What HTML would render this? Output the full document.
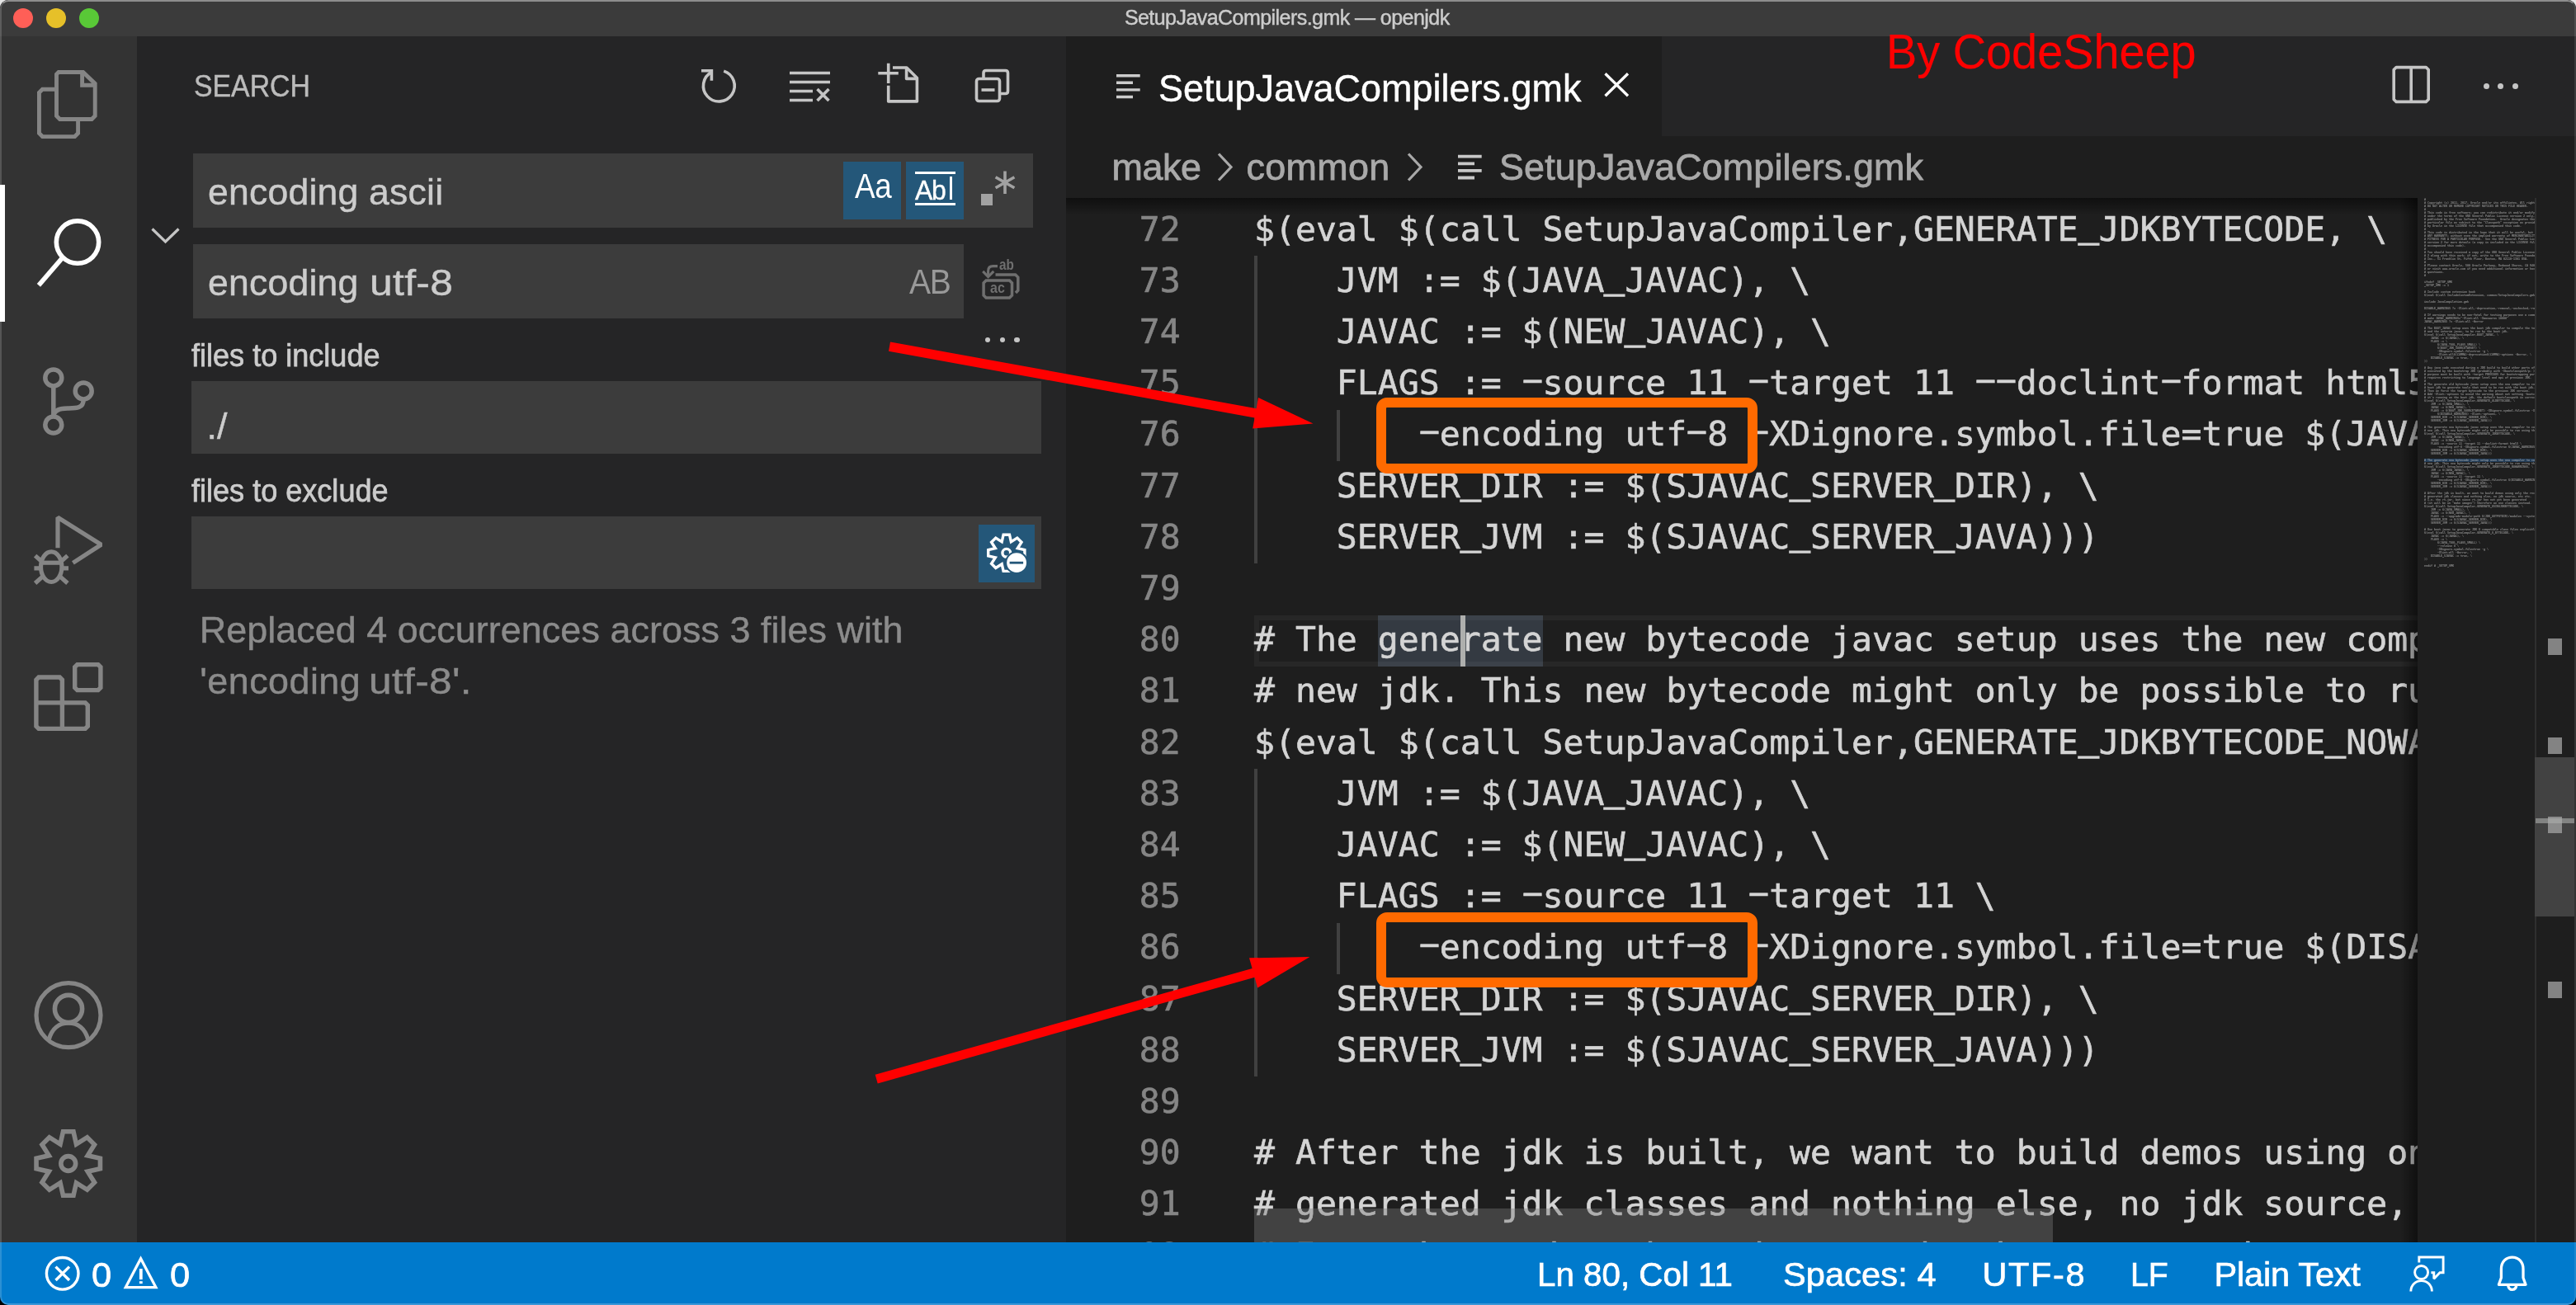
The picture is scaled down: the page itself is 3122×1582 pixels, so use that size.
<!DOCTYPE html>
<html lang="en"><head><meta charset="utf-8"><title>SetupJavaCompilers.gmk — openjdk</title><style>
html{background:linear-gradient(#e4e4e4 0,#e4e4e4 50%,#000 50%,#000 100%);}
html,body{margin:0;padding:0;overflow:hidden;}
body{width:3122px;height:1582px;}
#root{position:relative;width:3122px;height:1582px;overflow:hidden;background:#1e1e1e;font-family:"Liberation Sans", "DejaVu Sans", sans-serif;border-radius:10px;will-change:transform;}
#root div,#root span,#root svg,#root pre{position:absolute;}
.t{white-space:pre;line-height:1;-webkit-text-stroke:0.45px currentColor;}
.ln{left:-11.3px;width:150px;text-align:right;height:62.2px;line-height:62.2px;font-family:"DejaVu Sans Mono", "Liberation Mono", monospace;font-size:41.47px;color:#858585;white-space:pre;-webkit-text-stroke:0.6px #858585;}
.cl{left:228px;height:62.2px;line-height:62.2px;font-family:"DejaVu Sans Mono", "Liberation Mono", monospace;font-size:41.47px;color:#d4d4d4;white-space:pre;-webkit-text-stroke:0.6px #d4d4d4;}
.hy{position:static !important;display:inline-block;transform:translateY(-3.9px) scaleX(2);}
.us{position:static !important;display:inline-block;transform:translateY(-5.2px) scaleX(0.99);-webkit-text-stroke:1.6px #d4d4d4;}
.mm{margin:0;left:0;top:0;font-family:"DejaVu Sans Mono", "Liberation Mono", monospace;font-size:20px;line-height:24.096px;color:#c8c8c8;opacity:.6;transform-origin:0 0;transform:scale(0.166);white-space:pre;font-weight:bold;}
</style></head><body><div id="root">
<div style="left:0px;top:0px;width:3122px;height:44px;background:#3b3b3b;"></div>
<div style="left:15.8px;top:9.8px;width:24.4px;height:24.4px;border-radius:50%;background:#ff5f57"></div>
<div style="left:55.8px;top:9.8px;width:24.4px;height:24.4px;border-radius:50%;background:#e6c029"></div>
<div style="left:95.8px;top:9.8px;width:24.4px;height:24.4px;border-radius:50%;background:#59c837"></div>
<span class="t " style="left:1362.90px;top:9.34px;font-size:25px;color:#cccccc;letter-spacing:-0.55px;">SetupJavaCompilers.gmk — openjdk</span>
<div style="left:0px;top:44px;width:166px;height:1462px;background:#333333;"></div>
<div style="left:0px;top:223.7px;width:6px;height:166.3px;background:#ffffff;"></div>
<svg style="left:40px;top:80px;" width="84" height="94" viewBox="40 80 84 94">
<g fill="none" stroke="#858585" stroke-width="4.9" stroke-linejoin="miter">
<path d="M71 87.45 H100.7 L115.2 101.4 V140.45 L111.2 144.45 H72.5 L68.5 140.45 V89.95 Z"/>
<path d="M99.6 87.45 V103.3 H115.2"/>
<path d="M68.5 108.3 H51.45 L47.45 112.3 V161.6 L51.45 165.6 H90.6 L94.6 161.6 V144.45"/>
</g></svg>
<svg style="left:40px;top:258px;" width="90" height="96" viewBox="40 258 90 96">
<g fill="none" stroke="#ffffff" stroke-width="5.6">
<circle cx="94" cy="293.6" r="25.7"/>
<path d="M76 312.2 L46.9 345.8"/>
</g></svg>
<svg style="left:40px;top:438px;" width="84" height="96" viewBox="40 438 84 96">
<g fill="none" stroke="#858585" stroke-width="5.5" transform="translate(0 0.4)">
<circle cx="64.8" cy="457.5" r="10"/>
<circle cx="64.8" cy="514.7" r="10"/>
<circle cx="101.2" cy="473.5" r="10"/>
<path d="M64.8 467.5 V504.7"/>
<path d="M101.2 483.5 C101.2 495 92 494.5 82 494.5 C72 494.5 64.8 497 64.8 505"/>
</g></svg>
<svg style="left:36px;top:620px;" width="94" height="94" viewBox="36 620 94 94">
<g fill="none" stroke="#858585" stroke-width="5.2">
<path d="M70 664.2 V627.3 L122.6 660.3 L88.4 682.4" stroke-linejoin="bevel"/>
<ellipse cx="62.2" cy="687.2" rx="12.7" ry="18.3"/>
<path d="M50.5 682.2 H74"/>
<path d="M41.4 688.9 H49.5 M75 688.9 H83"/>
<path d="M42.6 673.6 L51 681 M81.9 673.6 L73.5 681"/>
<path d="M42.6 707 L52 698.6 M81.9 707 L72.5 698.6"/>
</g></svg>
<svg style="left:36px;top:798px;" width="94" height="94" viewBox="36 798 94 94">
<g fill="none" stroke="#858585" stroke-width="5.4" stroke-linejoin="miter">
<path d="M46.9 821 H72.4 L75.4 824 V851.9 H103.3 L106.3 854.9 V880.4 L103.3 883.4 H46.9 L43.9 880.4 V824 Z"/>
<path d="M75.4 851.9 V883.4 M43.9 851.9 H75.4"/>
<path d="M93.7 805.6 H118.9 L121.9 808.6 V833.6 L118.9 836.6 H93.7 L90.7 833.6 V808.6 Z"/>
</g></svg>
<svg style="left:36px;top:1184px;" width="94" height="94" viewBox="36 1184 94 94">
<g fill="none" stroke="#858585" stroke-width="5.2" transform="translate(0 0.5)">
<circle cx="83" cy="1230.2" r="39"/>
<circle cx="83" cy="1222.5" r="16.6" stroke-width="5.6"/>
<path d="M59.3 1259.5 C63 1246 72 1239.6 83 1239.6 C94 1239.6 103 1246 106.7 1259.5"/>
</g></svg>
<svg style="left:36px;top:1364px;" width="94" height="94" viewBox="36 1364 94 94">
<g fill="none" stroke="#858585" stroke-width="5.6" stroke-linejoin="miter">
<path d="M76.48 1371.80 L89.02 1371.80 L92.47 1387.03 L105.68 1378.71 L114.54 1387.57 L106.22 1400.78 L121.45 1404.23 L121.45 1416.77 L106.22 1420.22 L114.54 1433.43 L105.68 1442.29 L92.47 1433.97 L89.02 1449.20 L76.48 1449.20 L73.03 1433.97 L59.82 1442.29 L50.96 1433.43 L59.28 1420.22 L44.05 1416.77 L44.05 1404.23 L59.28 1400.78 L50.96 1387.57 L59.82 1378.71 L73.03 1387.03 Z"/>
<circle cx="82.75" cy="1410.5" r="8.9"/>
</g></svg>
<div style="left:166px;top:44px;width:1126px;height:1462px;background:#252526;"></div>
<span class="t " style="left:235.00px;top:86.47px;font-size:37.6px;color:#bbbbbb;transform-origin:0 0;transform:scaleX(0.9);">SEARCH</span>
<svg style="left:840px;top:76px;" width="60" height="56" viewBox="840 76 60 56">
<g fill="none" stroke="#c5c5c5" stroke-width="3.6">
<path d="M877.2 86.1 A18.9 18.9 0 1 1 862.4 87.4"/>
<path d="M850 85.8 H862.4 V97.8"/>
</g></svg>
<svg style="left:950px;top:76px;" width="64" height="56" viewBox="950 76 64 56">
<g fill="none" stroke="#c5c5c5" stroke-width="3.6">
<path d="M957 88.5 H1006 M957 99.5 H1006 M957 110.5 H985 M957 121.5 H985"/>
<path d="M990.5 108 L1004.5 122 M1004.5 108 L990.5 122"/>
</g></svg>
<svg style="left:1058px;top:70px;" width="64" height="62" viewBox="1058 70 64 62">
<g fill="none" stroke="#c5c5c5" stroke-width="3.6" stroke-linejoin="round">
<path d="M1064.3 88.7 H1088.8 M1076.7 76.7 V101"/>
<path d="M1082 82 H1098.8 L1111.4 94.6 V122.9 H1076.7 V103.8"/>
<path d="M1098.6 82 V95.4 H1111"/>
</g></svg>
<svg style="left:1176px;top:78px;" width="56" height="52" viewBox="1176 78 56 52">
<g fill="none" stroke="#c5c5c5" stroke-width="3.6" stroke-linejoin="round">
<rect x="1183.5" y="95.5" width="28" height="27" rx="3"/>
<path d="M1192 95 V88.5 Q1192 85.5 1195 85.5 H1218.5 Q1221.5 85.5 1221.5 88.5 V110.5 Q1221.5 113.5 1218.5 113.5 H1212"/>
<path d="M1189.5 109 H1205.5"/>
</g></svg>
<svg style="left:178px;top:270px;" width="46" height="32" viewBox="178 270 46 32"><path d="M184.5 277.5 L200.5 293 L216.5 277.5" fill="none" stroke="#c5c5c5" stroke-width="3.2"/></svg>
<div style="left:234px;top:186px;width:1018px;height:90px;background:#3c3c3c;"></div>
<span class="t " style="left:251.90px;top:210.65px;font-size:44.6px;color:#cccccc;letter-spacing:0.2px;">encoding ascii</span>
<div style="left:1022px;top:196px;width:70px;height:70px;background:#245779;"></div>
<span class="t " style="left:1036.30px;top:204.80px;font-size:41.7px;color:#ffffff;letter-spacing:-0.5px;-webkit-text-stroke:0;transform-origin:0 0;transform:scaleX(0.885);">Aa</span>
<div style="left:1098px;top:196px;width:70px;height:70px;background:#245779;"></div>
<span class="t " style="left:1108.80px;top:213.02px;font-size:34px;color:#ffffff;letter-spacing:-1.5px;-webkit-text-stroke:0.4px #fff;transform-origin:0 0;transform:scaleX(0.94);">Ab</span>
<div style="left:1151.0px;top:214.2px;width:3.0px;height:27.9px;background:#ffffff;"></div>
<div style="left:1109px;top:207.8px;width:48.8px;height:3.3px;background:#ffffff;"></div>
<div style="left:1109px;top:245.9px;width:48.8px;height:3.2px;background:#ffffff;"></div>
<div style="left:1188.9px;top:235px;width:13.8px;height:13.9px;background:#a2a2a2;"></div>
<svg style="left:1202px;top:205px;" width="34" height="34" viewBox="1202 205 34 34">
<g stroke="#a2a2a2" stroke-width="3.6" fill="none">
<path d="M1218 207.6 V235 M1206.6 214.8 L1229.4 227.8 M1229.4 214.8 L1206.6 227.8"/>
</g></svg>
<div style="left:234px;top:296px;width:934px;height:90px;background:#3c3c3c;"></div>
<span class="t " style="left:251.90px;top:320.55px;font-size:44.6px;color:#cccccc;letter-spacing:0.2px;">encoding </span>
<span class="t " style="left:448.00px;top:320.55px;font-size:44.6px;color:#cccccc;letter-spacing:0.3px;transform-origin:0 0;transform:scaleX(1.115);">utf-8</span>
<span class="t " style="left:1101.50px;top:319.93px;font-size:43.2px;color:#999999;letter-spacing:-1.5px;-webkit-text-stroke:0;transform-origin:0 0;transform:scaleX(0.905);">AB</span>
<svg style="left:1186px;top:310px;" width="54" height="58" viewBox="1186 310 54 58">
<g fill="none" stroke="#6f6f6f" stroke-width="3.5" stroke-linejoin="miter">
<path d="M1195.1 339.9 H1223.5 L1226.5 342.9 V358.1 L1223.5 361.1 H1195.1 L1192.1 358.1 V342.9 Z"/>
<path d="M1206.5 332.9 H1230.6 L1233.8 336.1 V352 L1231 355"/>
<path d="M1209 322.6 H1203.5 Q1197.6 322.6 1197.6 328.5 V334" stroke-width="3.1"/>
<path d="M1191.2 328.9 L1197.6 335.6 L1204.3 328.9" stroke-width="3.1"/>
</g></svg>
<span class="t " style="left:1211.00px;top:312.12px;font-size:18.4px;color:#6f6f6f;font-weight:bold;-webkit-text-stroke:0;transform-origin:0 0;transform:scaleX(0.83);">ab</span>
<span class="t " style="left:1200.30px;top:339.72px;font-size:18.4px;color:#6f6f6f;font-weight:bold;-webkit-text-stroke:0;transform-origin:0 0;transform:scaleX(0.87);">ac</span>
<div style="left:1193.9px;top:408.8px;width:6.6px;height:6.6px;border-radius:50%;background:#c5c5c5"></div>
<div style="left:1211.6000000000001px;top:408.8px;width:6.6px;height:6.6px;border-radius:50%;background:#c5c5c5"></div>
<div style="left:1229.1000000000001px;top:408.8px;width:6.6px;height:6.6px;border-radius:50%;background:#c5c5c5"></div>
<span class="t " style="left:231.60px;top:410.96px;font-size:39.5px;color:#cccccc;-webkit-text-stroke:0.75px #cccccc;transform-origin:0 0;transform:scaleX(0.913);">files to include</span>
<div style="left:232px;top:462px;width:1030px;height:87.5px;background:#3c3c3c;"></div>
<span class="t " style="left:250.50px;top:494.59px;font-size:44.9px;color:#cccccc;">./</span>
<span class="t " style="left:231.60px;top:574.96px;font-size:39.5px;color:#cccccc;-webkit-text-stroke:0.75px #cccccc;transform-origin:0 0;transform:scaleX(0.913);">files to exclude</span>
<div style="left:232px;top:626.4px;width:1030px;height:87.2px;background:#3c3c3c;"></div>
<div style="left:1186px;top:636px;width:68px;height:70px;background:#245779;"></div>
<svg style="left:1190px;top:640px;" width="60" height="62" viewBox="1190 640 60 62">
<defs><mask id="gm" maskUnits="userSpaceOnUse" x="1190" y="640" width="60" height="62"><rect x="1190" y="640" width="60" height="62" fill="#fff"/><circle cx="1232.1" cy="682.2" r="14" fill="#000"/></mask></defs>
<g fill="none" stroke="#ffffff" stroke-width="3.4" mask="url(#gm)">
<path d="M1216.10 648.21 L1223.50 648.21 L1225.39 656.81 L1232.81 652.06 L1238.04 657.29 L1233.29 664.71 L1241.89 666.60 L1241.89 674.00 L1233.29 675.89 L1238.04 683.31 L1232.81 688.54 L1225.39 683.79 L1223.50 692.39 L1216.10 692.39 L1214.21 683.79 L1206.79 688.54 L1201.56 683.31 L1206.31 675.89 L1197.71 674.00 L1197.71 666.60 L1206.31 664.71 L1201.56 657.29 L1206.79 652.06 L1214.21 656.81 Z"/>
<circle cx="1219.8" cy="670.3" r="4.9"/>
</g>
<circle cx="1232.1" cy="682.2" r="11.9" fill="#ffffff"/>
<rect x="1223.6" y="680.8" width="16.5" height="2.8" fill="#245779"/>
</svg>
<span class="t " style="left:241.70px;top:742.29px;font-size:44.9px;color:#8b8b8b;letter-spacing:0.05px;">Replaced 4 occurrences across 3 files with</span>
<span class="t " style="left:242.30px;top:803.79px;font-size:44.9px;color:#8b8b8b;letter-spacing:0.45px;">&#x27;encoding </span>
<span class="t " style="left:447.20px;top:803.79px;font-size:44.9px;color:#8b8b8b;letter-spacing:0.3px;transform-origin:0 0;transform:scaleX(1.105);">utf-8&#x27;.</span>
<div style="left:1292px;top:44px;width:1830px;height:121px;background:#252526;"></div>
<div style="left:1292px;top:44px;width:722px;height:121px;background:#1e1e1e;"></div>
<div style="left:1292px;top:165px;width:1830px;height:1341px;background:#1e1e1e;"></div>
<svg style="left:1351px;top:87.5px;" width="34" height="34" viewBox="1351 87.5 34 34"><path d="M1353 91.2 H1381.7 M1353 99.8 H1373 M1353 108.4 H1381.7 M1353 117.0 H1373" stroke="#cccccc" stroke-width="3.4" fill="none"/></svg>
<span class="t " style="left:1403.60px;top:83.21px;font-size:47px;color:#ffffff;transform-origin:0 0;transform:scaleX(0.957);">SetupJavaCompilers.gmk</span>
<svg style="left:1940px;top:84px;" width="40" height="38" viewBox="1940 84 40 38"><path d="M1945.5 89.3 L1973 116.3 M1973 89.3 L1945.5 116.3" stroke="#ffffff" stroke-width="3.3" fill="none"/></svg>
<span class="t " style="left:2285.60px;top:32.77px;font-size:59.1px;color:#ff0000;-webkit-text-stroke:0.2px #ff0000;transform-origin:0 0;transform:scaleX(0.945);">By CodeSheep</span>
<svg style="left:2890px;top:60px;" width="70" height="80" viewBox="2890 60 70 80">
<g fill="none" stroke="#c5c5c5" stroke-width="3.6" stroke-linejoin="round">
<path d="M2904.2 81.6 H2940.2 L2943.2 84.6 V120.4 L2940.2 123.4 H2904.2 L2901.2 120.4 V84.6 Z"/>
<path d="M2922.2 81.6 V123.4"/>
</g></svg>
<div style="left:3010.0px;top:100.9px;width:7px;height:7px;border-radius:50%;background:#c5c5c5"></div>
<div style="left:3027.3px;top:100.9px;width:7px;height:7px;border-radius:50%;background:#c5c5c5"></div>
<div style="left:3044.7px;top:100.9px;width:7px;height:7px;border-radius:50%;background:#c5c5c5"></div>
<span class="t " style="left:1347.50px;top:180.89px;font-size:44.9px;color:#a9a9a9;letter-spacing:-0.45px;-webkit-text-stroke:0.8px #a9a9a9;">make</span>
<svg style="left:1470px;top:180px;" width="30" height="46" viewBox="1470 180 30 46"><path d="M1477 186.5 L1492 202.5 L1477 218.5" fill="none" stroke="#a9a9a9" stroke-width="3.2"/></svg>
<span class="t " style="left:1510.60px;top:180.89px;font-size:44.9px;color:#a9a9a9;letter-spacing:0.3px;-webkit-text-stroke:0.8px #a9a9a9;">common</span>
<svg style="left:1700px;top:180px;" width="30" height="46" viewBox="1700 180 30 46"><path d="M1707 186.5 L1722 202.5 L1707 218.5" fill="none" stroke="#a9a9a9" stroke-width="3.2"/></svg>
<svg style="left:1764.5px;top:185.5px;" width="34" height="34" viewBox="1764.5 185.5 34 34"><path d="M1766.5 189.2 H1795.2 M1766.5 197.8 H1786.5 M1766.5 206.4 H1795.2 M1766.5 215.0 H1786.5" stroke="#c8c8c8" stroke-width="3.8" fill="none"/></svg>
<span class="t " style="left:1817.00px;top:180.89px;font-size:44.9px;color:#a9a9a9;letter-spacing:0.12px;-webkit-text-stroke:0.8px #a9a9a9;">SetupJavaCompilers.gmk</span>
<div style="left:1292px;top:240px;width:1638px;height:1266px;overflow:hidden">
<div style="left:378px;top:506.1px;width:200px;height:61.8px;background:#343a42"></div>
<div style="left:228px;top:506.1px;width:1500px;height:61.8px;box-sizing:border-box;border:6.2px solid rgba(255,255,255,0.045)"></div>
<div style="left:228px;top:70.0px;width:3.5px;height:373.2px;background:#404040"></div>
<div style="left:328px;top:256.6px;width:3.5px;height:62.2px;background:#404040"></div>
<div style="left:228px;top:692.0px;width:3.5px;height:373.2px;background:#404040"></div>
<div style="left:328px;top:878.6px;width:3.5px;height:62.2px;background:#404040"></div>
<div class="ln" style="top:-55.60px">71</div>
<div class="cl" style="top:-55.60px"># new jdk. This new bytecode might only be possible to run using the new jvm.</div>
<div class="ln" style="top:6.60px">72</div>
<div class="cl" style="top:6.60px">$(eval $(call SetupJavaCompiler,GENERATE<span class="us">_</span>JDKBYTECODE, \</div>
<div class="ln" style="top:68.80px">73</div>
<div class="cl" style="top:68.80px">    JVM := $(JAVA<span class="us">_</span>JAVAC), \</div>
<div class="ln" style="top:131.00px">74</div>
<div class="cl" style="top:131.00px">    JAVAC := $(NEW<span class="us">_</span>JAVAC), \</div>
<div class="ln" style="top:193.20px">75</div>
<div class="cl" style="top:193.20px">    FLAGS := <span class="hy">-</span>source 11 <span class="hy">-</span>target 11 <span class="hy">-</span><span class="hy">-</span>doclint<span class="hy">-</span>format html5 \</div>
<div class="ln" style="top:255.40px">76</div>
<div class="cl" style="top:255.40px">        <span class="hy">-</span>encoding utf<span class="hy">-</span>8 <span class="hy">-</span>XDignore.symbol.file=true $(JAVAC<span class="us">_</span>WARNINGS), \</div>
<div class="ln" style="top:317.60px">77</div>
<div class="cl" style="top:317.60px">    SERVER<span class="us">_</span>DIR := $(SJAVAC<span class="us">_</span>SERVER<span class="us">_</span>DIR), \</div>
<div class="ln" style="top:379.80px">78</div>
<div class="cl" style="top:379.80px">    SERVER<span class="us">_</span>JVM := $(SJAVAC<span class="us">_</span>SERVER<span class="us">_</span>JAVA)))</div>
<div class="ln" style="top:442.00px">79</div>
<div class="ln" style="top:504.20px">80</div>
<div class="cl" style="top:504.20px"># The generate new bytecode javac setup uses the new compiler to compile for the</div>
<div class="ln" style="top:566.40px">81</div>
<div class="cl" style="top:566.40px"># new jdk. This new bytecode might only be possible to run using the new jvm.</div>
<div class="ln" style="top:628.60px">82</div>
<div class="cl" style="top:628.60px">$(eval $(call SetupJavaCompiler,GENERATE<span class="us">_</span>JDKBYTECODE<span class="us">_</span>NOWARNINGS, \</div>
<div class="ln" style="top:690.80px">83</div>
<div class="cl" style="top:690.80px">    JVM := $(JAVA<span class="us">_</span>JAVAC), \</div>
<div class="ln" style="top:753.00px">84</div>
<div class="cl" style="top:753.00px">    JAVAC := $(NEW<span class="us">_</span>JAVAC), \</div>
<div class="ln" style="top:815.20px">85</div>
<div class="cl" style="top:815.20px">    FLAGS := <span class="hy">-</span>source 11 <span class="hy">-</span>target 11 \</div>
<div class="ln" style="top:877.40px">86</div>
<div class="cl" style="top:877.40px">        <span class="hy">-</span>encoding utf<span class="hy">-</span>8 <span class="hy">-</span>XDignore.symbol.file=true $(DISABLE<span class="us">_</span>WARNINGS), \</div>
<div class="ln" style="top:939.60px">87</div>
<div class="cl" style="top:939.60px">    SERVER<span class="us">_</span>DIR := $(SJAVAC<span class="us">_</span>SERVER<span class="us">_</span>DIR), \</div>
<div class="ln" style="top:1001.80px">88</div>
<div class="cl" style="top:1001.80px">    SERVER<span class="us">_</span>JVM := $(SJAVAC<span class="us">_</span>SERVER<span class="us">_</span>JAVA)))</div>
<div class="ln" style="top:1064.00px">89</div>
<div class="ln" style="top:1126.20px">90</div>
<div class="cl" style="top:1126.20px"># After the jdk is built, we want to build demos using only the recently</div>
<div class="ln" style="top:1188.40px">91</div>
<div class="cl" style="top:1188.40px"># generated jdk classes and nothing else, no jdk source, etc etc.</div>
<div class="ln" style="top:1250.60px">92</div>
<div class="cl" style="top:1250.60px"># I.e. the rt.jar, but since rt.jar has not yet been generated</div>
<div style="left:478.20000000000005px;top:506.1px;width:6px;height:61.8px;background:#aeafad"></div>
</div>
<div style="left:1292px;top:240px;width:1780px;height:21px;background:linear-gradient(#000000 0,rgba(0,0,0,0) 100%);opacity:.5"></div>
<div style="left:1520px;top:1464.5px;width:968px;height:41.5px;background:rgba(121,121,121,0.4);"></div>
<div style="left:2930px;top:240px;width:142px;height:1266px;background:#1e1e1e;"></div>
<div style="left:2909px;top:240px;width:21px;height:1266px;background:linear-gradient(90deg,rgba(0,0,0,0),rgba(0,0,0,0.48))"></div>
<div style="left:2937.5px;top:556px;width:134.5px;height:4px;background:#264f78;opacity:.65"></div>
<div style="left:2937.5px;top:240px;width:134.5px;height:460px;overflow:hidden">
<pre class="mm">#
# Copyright (c) 2011, 2017, Oracle and/or its affiliates. All rights reserved.
# DO NOT ALTER OR REMOVE COPYRIGHT NOTICES OR THIS FILE HEADER.
#
# This code is free software; you can redistribute it and/or modify it
# under the terms of the GNU General Public License version 2 only, as
# published by the Free Software Foundation.  Oracle designates this
# particular file as subject to the &quot;Classpath&quot; exception as provided
# by Oracle in the LICENSE file that accompanied this code.
#
# This code is distributed in the hope that it will be useful, but WITHOUT
# ANY WARRANTY; without even the implied warranty of MERCHANTABILITY or
# FITNESS FOR A PARTICULAR PURPOSE.  See the GNU General Public License
# version 2 for more details (a copy is included in the LICENSE file that
# accompanied this code).
#
# You should have received a copy of the GNU General Public License version
# 2 along with this work; if not, write to the Free Software Foundation,
# Inc., 51 Franklin St, Fifth Floor, Boston, MA 02110-1301 USA.
#
# Please contact Oracle, 500 Oracle Parkway, Redwood Shores, CA 94065 USA
# or visit www.oracle.com if you need additional information or have any
# questions.
#

ifndef _SETUP_GMK
_SETUP_GMK := 1

# Include custom extension hook
$(eval $(call IncludeCustomExtension, common/SetupJavaCompilers.gmk))

include JavaCompilation.gmk

DISABLE_WARNINGS ?= -Xlint:all,-deprecation,-removal,-unchecked,-rawtypes,-cast,-serial,-dep-ann,-static,-fallthrough,-try,-varargs,-empty,-finally

# If warnings needs to be non-fatal for testing purposes use a command like:
# make JAVAC_WARNINGS=&quot;-Xlint:all -Xmaxwarns 10000&quot;
JAVAC_WARNINGS ?= -Xlint:all -Werror

# The BOOT_JAVAC setup uses the boot jdk compiler to compile the tools
# and the interim javac, to be run by the boot jdk.
$(eval $(call SetupJavaCompiler,BOOT_JAVAC, \
    JAVAC := $(JAVAC), \
    FLAGS := \
        $(JAVA_TOOL_FLAGS_SMALL) \
        $(BOOT_JDK_SOURCETARGET) \
        -XDignore.symbol.file=true -g \
        -Xlint:all$(COMMA)-deprecation$(COMMA)-options -Werror, \
    DISABLE_SJAVAC := true, \
))

# Any java code executed during a JDK build to build other parts of the JDK must be
# executed by the bootstrap JDK (probably with -Xbootclasspath/p: ) and for this
# purpose must be built with -target PREVIOUS for bootstrapping purposes, which
# requires restricting to language level and api of previous JDK.
#
# The generate old bytecode javac setup uses the new compiler to compile for the
# boot jdk to generate tools that need to be run with the boot jdk.
# Thus we force the target bytecode to the previous JDK version.
# Add -Xlint:-options to avoid the warning about not setting -bootclasspath. Since
# it&#x27;s running on the boot jdk, the default bootclasspath is correct.
$(eval $(call SetupJavaCompiler,GENERATE_OLDBYTECODE, \
    JVM := $(JAVA_SMALL), \
    JAVAC := $(NEW_JAVAC), \
    FLAGS := $(BOOT_JDK_SOURCETARGET) -XDignore.symbol.file=true -XDstringConcat=inline \
        $(DISABLE_WARNINGS) -Xlint:-options, \
    SERVER_DIR := $(SJAVAC_SERVER_DIR), \
    SERVER_JVM := $(SJAVAC_SERVER_JAVA)))

# The generate new bytecode javac setup uses the new compiler to compile for the
# new jdk. This new bytecode might only be possible to run using the new jvm.
$(eval $(call SetupJavaCompiler,GENERATE_JDKBYTECODE, \
    JVM := $(JAVA_JAVAC), \
    JAVAC := $(NEW_JAVAC), \
    FLAGS := -source 11 -target 11 --doclint-format html5 \
        -encoding utf-8 -XDignore.symbol.file=true $(JAVAC_WARNINGS), \
    SERVER_DIR := $(SJAVAC_SERVER_DIR), \
    SERVER_JVM := $(SJAVAC_SERVER_JAVA)))

# The generate new bytecode javac setup uses the new compiler to compile for the
# new jdk. This new bytecode might only be possible to run using the new jvm.
$(eval $(call SetupJavaCompiler,GENERATE_JDKBYTECODE_NOWARNINGS, \
    JVM := $(JAVA_JAVAC), \
    JAVAC := $(NEW_JAVAC), \
    FLAGS := -source 11 -target 11 \
        -encoding utf-8 -XDignore.symbol.file=true $(DISABLE_WARNINGS), \
    SERVER_DIR := $(SJAVAC_SERVER_DIR), \
    SERVER_JVM := $(SJAVAC_SERVER_JAVA)))

# After the jdk is built, we want to build demos using only the recently
# generated jdk classes and nothing else, no jdk source, etc etc.
# I.e. the rt.jar, but since rt.jar has not yet been generated
# (it will be in &quot;make images&quot;) therefore we use classes instead.
$(eval $(call SetupJavaCompiler,GENERATE_USINGJDKBYTECODE, \
    JVM := $(JAVA_SMALL), \
    JAVAC := $(NEW_JAVAC), \
    FLAGS := --upgrade-module-path $(JDK_OUTPUTDIR)/modules --system none $(DISABLE_WARNINGS), \
    SERVER_DIR := $(SJAVAC_SERVER_DIR), \
    SERVER_JVM := $(SJAVAC_SERVER_JAVA)))

# Use boot javac to generate JDK 8 compatible class files explicitly
$(eval $(call SetupJavaCompiler,GENERATE_8_BYTECODE, \
    JAVAC := $(JAVAC), \
    FLAGS := \
        $(JAVA_TOOL_FLAGS_SMALL) \
        --release 8 \
        -XDignore.symbol.file=true -g \
        -Xlint:all -Werror, \
    DISABLE_SJAVAC := true, \
))

endif # _SETUP_GMK
</pre>
</div>
<div style="left:3072px;top:240px;width:1.5px;height:1266px;background:#2f2f2f;"></div>
<div style="left:3072px;top:918px;width:48px;height:193.4px;background:#424242;"></div>
<div style="left:3088px;top:773.5px;width:17.2px;height:20.2px;background:rgba(160,160,160,0.78);"></div>
<div style="left:3088px;top:893.5px;width:17.2px;height:20.2px;background:rgba(160,160,160,0.78);"></div>
<div style="left:3088px;top:989.8px;width:17.2px;height:20.2px;background:rgba(160,160,160,0.78);"></div>
<div style="left:3088px;top:1190px;width:17.2px;height:20.2px;background:rgba(160,160,160,0.78);"></div>
<div style="left:3073px;top:991.9px;width:47px;height:6px;background:rgba(174,175,173,0.6);"></div>
<svg style="left:0px;top:0px;pointer-events:none" width="3122" height="1582" viewBox="0 0 3122 1582"><polygon fill="#ff0000" points="1077.0,425.7 1520.6,506.4 1518.2,519.5 1591.5,513.5 1525.0,482.1 1522.7,495.2 1079.0,414.5"/><polygon fill="#ff0000" points="1063.7,1313.4 1520.6,1184.7 1524.1,1197.4 1587.4,1160.1 1514.0,1161.3 1517.6,1174.1 1060.7,1302.8"/></svg>
<div style="left:1668px;top:482px;width:462px;height:92px;box-sizing:border-box;border:12px solid #ff6a00;border-radius:13px"></div>
<div style="left:1668px;top:1106px;width:462px;height:91px;box-sizing:border-box;border:12px solid #ff6a00;border-radius:13px"></div>
<div style="left:0px;top:1506px;width:3122px;height:76px;background:#007acc;"></div>
<svg style="left:50px;top:1518px;" width="52" height="52" viewBox="50 1518 52 52">
<g fill="none" stroke="#ffffff" stroke-width="3.4">
<circle cx="75.7" cy="1543.8" r="19.3"/>
<path d="M67.5 1535.6 L84 1552 M84 1535.6 L67.5 1552"/>
</g></svg>
<span class="t " style="left:110.90px;top:1525.45px;font-size:42px;color:#ffffff;-webkit-text-stroke:0.7px #fff;transform-origin:0 0;transform:scaleX(1.035);">0</span>
<svg style="left:145px;top:1518px;" width="52" height="50" viewBox="145 1518 52 50">
<g fill="none" stroke="#ffffff" stroke-width="3.3" stroke-linejoin="miter" stroke-miterlimit="4">
<path d="M170.6 1525.75 L188.9 1560.55 H152.3 Z"/>
</g>
<rect x="168.9" y="1538.1" width="3.8" height="13" fill="#fff"/><rect x="168.9" y="1553.2" width="3.8" height="2.9" fill="#fff"/></svg>
<span class="t " style="left:205.60px;top:1525.45px;font-size:42px;color:#ffffff;-webkit-text-stroke:0.7px #fff;transform-origin:0 0;transform:scaleX(1.035);">0</span>
<span class="t " style="left:1863.20px;top:1524.27px;font-size:41.5px;color:#ffffff;-webkit-text-stroke:0.7px #fff;transform-origin:0 0;transform:scaleX(0.972);">Ln 80, Col 11</span>
<span class="t " style="left:2161.00px;top:1524.27px;font-size:41.5px;color:#ffffff;letter-spacing:0.12px;-webkit-text-stroke:0.7px #fff;">Spaces: 4</span>
<span class="t " style="left:2402.50px;top:1524.27px;font-size:41.5px;color:#ffffff;letter-spacing:1.6px;-webkit-text-stroke:0.7px #fff;">UTF-8</span>
<span class="t " style="left:2582.00px;top:1524.27px;font-size:41.5px;color:#ffffff;-webkit-text-stroke:0.7px #fff;transform-origin:0 0;transform:scaleX(0.945);">LF</span>
<span class="t " style="left:2683.50px;top:1524.27px;font-size:41.5px;color:#ffffff;letter-spacing:-0.2px;-webkit-text-stroke:0.7px #fff;">Plain Text</span>
<svg style="left:2914px;top:1516px;" width="54" height="56" viewBox="2914 1516 54 56">
<g fill="none" stroke="#ffffff" stroke-width="2.9" stroke-linejoin="miter" stroke-miterlimit="2">
<circle cx="2934.6" cy="1542.5" r="8"/>
<path d="M2921.8 1565.4 A12.8 12.8 0 0 1 2947.4 1565.4"/>
<path d="M2931.8 1530.6 V1524 H2961.1 V1542.8 H2957 L2949.8 1550.3 V1542.8 H2946.4"/>
</g></svg>
<svg style="left:3018px;top:1516px;" width="54" height="56" viewBox="3018 1516 54 56">
<g fill="none" stroke="#ffffff" stroke-width="3.3" stroke-linejoin="round">
<path d="M3028.4 1557.3 L3031.4 1549 V1538.4 C3031.4 1529.6 3037.2 1524.1 3044.7 1524.1 C3052.2 1524.1 3058 1529.6 3058 1538.4 V1549 L3061 1557.3 Z"/>
<path d="M3039.7 1558.2 C3040.2 1561.8 3042.2 1563.4 3044.7 1563.4 C3047.2 1563.4 3049.2 1561.8 3049.7 1558.2"/>
</g></svg>
<div style="left:0;top:0;width:3122px;height:1582px;box-sizing:border-box;border:2px solid rgba(255,255,255,0.2);border-color:rgba(255,255,255,0.42) rgba(255,255,255,0.1) rgba(255,255,255,0.22) rgba(255,255,255,0.17);border-radius:10px;pointer-events:none"></div>
</div></body></html>
